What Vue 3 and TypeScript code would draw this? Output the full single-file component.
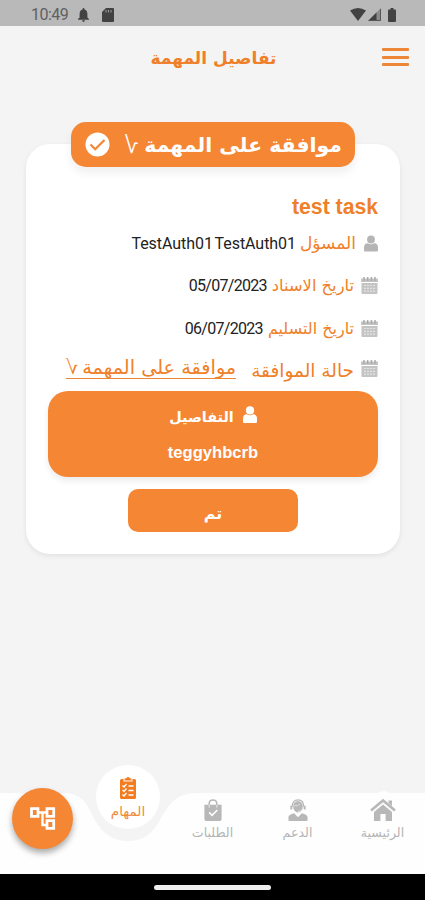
<script setup lang="ts">
interface Row { kind: string; label: string; value: string }
const rows: Row[] = [
  { kind: 'person', label: 'المسؤل', value: 'TestAuth01 TestAuth01' },
  { kind: 'assigned', label: 'تاريخ الاسناد', value: '05/07/2023' },
  { kind: 'delivery', label: 'تاريخ التسليم', value: '06/07/2023' },
]
</script>

<template>
  <div class="screen" dir="rtl">
    <header class="status" dir="ltr">
      <span class="time">10:49</span>
      <svg class="bell" width="11" height="14" viewBox="0 0 11 14"><path d="M5.5 0Q6.5 0 6.5 1.4Q9.4 2.3 9.4 6V9.5L11 11V11.7H0V11L1.6 9.5V6Q1.6 2.3 4.5 1.4Q4.5 0 5.5 0ZM4 12.3H7Q6.7 14 5.5 14Q4.3 14 4 12.3Z" fill="#424242" /></svg>
      <svg class="sd" width="12" height="14" viewBox="0 0 12 14"><path d="M4 0H11Q12 0 12 1V13Q12 14 11 14H1Q0 14 0 13V4Z" fill="#424242" /><path d="M4 2V4.5M6.5 2V4.5M9 2V4.5" stroke="#999" stroke-width="1.1" /></svg>
      <span class="grow"></span>
      <svg width="16" height="13" viewBox="0 0 16 13"><path d="M0 2.6Q8-2.6 16 2.6L8 13Z" fill="#424242" /></svg>
      <svg class="signal" width="13" height="13" viewBox="0 0 13 13"><path d="M13 0V13H0Z" fill="#8b8b8b" /><path d="M8.5 4.5V13H0Z" fill="#424242" /><path d="M12.5 1V12.5H1" fill="none" stroke="#555" /></svg>
      <svg class="battery" width="8" height="14" viewBox="0 0 8 14"><path d="M2.5 0H5.5V1.4H7Q8 1.4 8 2.4V13Q8 14 7 14H1Q0 14 0 13V2.4Q0 1.4 1 1.4H2.5Z" fill="#424242" /></svg>
    </header>

    <div class="appbar">
      <button class="menu" aria-label="القائمة"><i></i><i></i><i></i></button>
      <h1><span class="fit">تفاصيل المهمة</span></h1>
    </div>

    <main class="card">
      <div class="badge">
        <span class="badge-text fit">موافقة على المهمة</span>
        <span class="root">√</span>
        <svg class="check" width="25" height="25" viewBox="0 0 25 25"><circle cx="12.5" cy="12.5" r="12" fill="#fff" /><path d="M5.5 12.5L10.2 17.2L19.5 8" fill="none" stroke="#f58634" stroke-width="2.3" /></svg>
      </div>
      <h2 dir="ltr">test task</h2>
      <div v-for="row in rows" :key="row.kind" class="row" :class="row.kind">
        <svg v-if="row.kind === 'person'" class="ricon" width="15" height="17" viewBox="0 0 15 17"><circle cx="7.5" cy="4.2" r="4.2" fill="#b5b5b5" /><path d="M0 16V13Q0 8.5 4 8.3Q7.5 10.5 11 8.3Q15 8.5 15 13V16Q15 17 14 17H1Q0 17 0 16Z" fill="#b5b5b5" /></svg>
        <svg v-else class="ricon" width="17" height="17" viewBox="0 0 17 17"><path d="M0 1.5H17V5H0ZM.5 6H16.5V16Q16.5 17 15.5 17H1.5Q.5 17 .5 16Z" fill="#c4c4c4" /><path d="M3 0V4M6.7 0V4M10.4 0V4M14 0V4" stroke="#aaa" stroke-width="1.5" /><path d="M3 8.5H14M3 11.3H14M3 14.1H14" stroke="#e4e4e4" stroke-width="1.2" stroke-dasharray="2 1" /></svg>
        <span class="label fit">{{ row.label }}</span>
        <span class="value fit" dir="ltr">{{ row.value }}</span>
      </div>
      <div class="row approval">
        <svg class="ricon" width="17" height="17" viewBox="0 0 17 17"><path d="M0 1.5H17V5H0ZM.5 6H16.5V16Q16.5 17 15.5 17H1.5Q.5 17 .5 16Z" fill="#c4c4c4" /><path d="M3 0V4M6.7 0V4M10.4 0V4M14 0V4" stroke="#aaa" stroke-width="1.5" /><path d="M3 8.5H14M3 11.3H14M3 14.1H14" stroke="#e4e4e4" stroke-width="1.2" stroke-dasharray="2 1" /></svg>
        <span class="label fit">حالة الموافقة</span>
        <a class="link"><span class="fit">موافقة على المهمة</span><span class="root">√</span></a>
      </div>
      <section class="details">
        <div class="details-head">
          <svg width="14" height="17" viewBox="0 0 15 18"><circle cx="7.5" cy="4.6" r="4.4" fill="#fff" /><path d="M0 17V13.5Q0 9 4 8.8Q7.5 11 11 8.8Q15 9 15 13.5V17Q15 18 14 18H1Q0 18 0 17Z" fill="#fff" /></svg>
          <span class="fit">التفاصيل</span>
        </div>
        <p dir="ltr">teggyhbcrb</p>
      </section>
      <button class="done"><span class="fit">تم</span></button>
    </main>

    <nav class="nav">
      <svg class="nav-bg" width="425" height="81" viewBox="0 0 425 81"><path d="M0 0H62C88 0 88 17 98 32Q109 48 128 48Q147 48 157 32C167 15 173 0 197 0H376L382-1.5Q385-3 389 0H425V81H0Z" fill="#fefefe" /></svg>
      <div class="item home">
        <svg width="26" height="22" viewBox="0 0 26 22"><path d="M1 11.5L13 1.5L25 11.5" fill="none" stroke="#b8b8b8" stroke-width="2.6" /><path d="M18.5 1.5H22V7L18.5 4ZM13 5.5L22 13V22H15.6V15H10.4V22H4V13Z" fill="#b8b8b8" /></svg>
        <span class="fit">الرئيسية</span>
      </div>
      <div class="item support">
        <svg width="20" height="22" viewBox="0 0 20 23"><path d="M4 8Q4 1 10 1T16 8" fill="none" stroke="#b8b8b8" stroke-width="1.3" /><ellipse cx="10" cy="8" rx="5" ry="6" fill="#b8b8b8" /><path d="M3 7V11M17 7V11" stroke="#b8b8b8" stroke-width="2" /><path d="M0 22V19Q0 16.5 6 15L10 19L14 15Q20 16.5 20 19V22Q20 23 19 23H1Q0 23 0 22Z" fill="#b8b8b8" /><path d="M6 7Q10 8 12 5M14 11Q13 13 10 13" fill="none" stroke="#eee" stroke-width=".8" /></svg>
        <span class="fit">الدعم</span>
      </div>
      <div class="item orders">
        <svg width="18" height="22" viewBox="0 0 18 23"><path d="M5 9V5Q5 1 9 1T13 5V9" fill="none" stroke="#b8b8b8" stroke-width="1.6" /><path d="M0 6H18V21Q18 23 16 23H2Q0 23 0 21Z" fill="#b8b8b8" /><path d="M5 6V9M13 6V9" stroke="#eee" stroke-width="1" /><path d="M5 14L8 17L13.5 11.5" fill="none" stroke="#fff" stroke-width="1.7" /></svg>
        <span class="fit">الطلبات</span>
      </div>
      <div class="item tasks">
        <svg width="16" height="22" viewBox="0 0 16 22"><path d="M1.5 2H3.5V4.5H12.5V2H14.5Q16 2 16 3.5V20.5Q16 22 14.5 22H1.5Q0 22 0 20.5V3.5Q0 2 1.5 2ZM4.5 1.5H6Q8-1.3 10 1.5H11.5V3.6H4.5Z" fill="#f37b20" /><path d="M2.5 8.5L4 10L6.5 7M2.5 13L4 14.5L6.5 11.5M2.5 17.5L4 19L6.5 16M8.5 9H13.5M8.5 13.5H13.5M8.5 18H13.5" fill="none" stroke="#fff" stroke-width="1.3" /></svg>
        <span class="fit">المهام</span>
      </div>
      <button class="fab" aria-label="المخطط">
        <svg width="26" height="24" viewBox="0 0 26 24"><path d="M8 5.5H17M12.5 5.5V18H17" fill="none" stroke="#fff" stroke-width="2.4" /><path d="M1.5 1.7H8V9.3H1.5ZM17 1.7H23.7V9.3H17ZM17 13.7H23.7V21.3H17Z" fill="none" stroke="#fff" stroke-width="2.8" /></svg>
      </button>
    </nav>
    <footer class="system"><i></i></footer>
  </div>
</template>

<style>
body { margin: 0; }
</style>

<style scoped>
* { box-sizing: border-box; }
.screen { width: 425px; height: 900px; display: flex; flex-direction: column; background: #f4f4f4; overflow: hidden; font-family: "DejaVu Sans", sans-serif; color: #ef8029; }
svg { display: block; flex: none; overflow: visible; }
button { border: 0; padding: 0; font: inherit; color: inherit; background: none; }
h1, h2, p { margin: 0; }
.fit { display: inline-block; white-space: nowrap; flex: none; }
.status { height: 26px; flex: none; background: #b9b9b9; display: flex; align-items: center; padding: 3px 29px 0 31px; }
.time { font: 16px/20px Roboto, sans-serif; letter-spacing: -0.5px; color: #606060; width: 38px; white-space: nowrap; }
.bell { margin-left: 9px; }
.sd { margin-left: 13px; }
.grow { flex: 1; }
.signal { margin-left: 2px; }
.battery { margin-left: 7px; }
.appbar { height: 96px; flex: none; display: flex; padding: 22px 16px 0; }
.menu { width: 27px; height: 18px; display: flex; flex-direction: column; justify-content: space-between; }
.menu i { height: 3px; background: #ed8637; border-radius: 1px; }
h1 { font-size: 17px; line-height: 24px; height: 24px; width: 125px; margin: -2px 106px 0 0; display: flex; justify-content: center; }
.card { width: 374px; height: 410px; flex: none; margin: 22px 25px 0 26px; background: #fff; border-radius: 24px; box-shadow: 0 2px 5px #00000014; display: flex; flex-direction: column; align-items: center; padding: 0 22px; }
.badge { width: 284px; height: 45px; flex: none; margin: -22px 0 0 23px; align-self: flex-end; background: #f58634; color: #fff; border-radius: 15px; box-shadow: 0 6px 10px #00000010; display: flex; align-items: center; padding: 0 13px 0 15px; }
.badge-text { font-size: 20.4px; line-height: 30px; font-weight: 700; }
.root { display: inline-block; transform: scaleX(-1); }
.badge .root { font-size: 24px; line-height: 30px; margin-right: 6px; font-family: "DejaVu Sans Light", "DejaVu Sans", sans-serif; font-weight: 200; }
.check { margin-right: auto; transform: translateX(-1px); }
h2 { font: 700 21.2px/26px "Liberation Sans", sans-serif; align-self: flex-start; margin-top: 27px; height: 26px; }
.row { height: 42px; flex: none; align-self: stretch; display: flex; align-items: center; font-size: 16px; }
.ricon { width: 17px; }
.person .ricon { width: 14px; }
.person { margin-top: 2px; }
.assigned { height: 43px; }
.label { margin-right: 7px; }
.person .label { font-size: 17px; margin-right: 8px; }
.assigned .label { font-size: 16.3px; }
.value { margin-right: 5px; font-family: Roboto, sans-serif; color: #222; letter-spacing: -0.7px; }
.person .value { margin-right: 4px; letter-spacing: -0.05px; word-spacing: -2px; }
.approval { font-size: 18.5px; }
.approval .ricon { margin-top: -3px; }
.link { margin: -4px 15px 0 0; font-size: 19.3px; line-height: 20px; display: flex; gap: 4px; border-bottom: 1px solid #ed8637; }
.details { width: 330px; height: 86px; flex: none; background: #f58634; color: #fff; border-radius: 20px; box-shadow: 0 4px 6px #00000014; display: flex; flex-direction: column; align-items: center; padding-top: 15px; }
.details-head { display: flex; gap: 9px; height: 25px; font-size: 14.4px; line-height: 23px; font-weight: 700; }
.details p { font: 700 16.6px/22px "Liberation Sans", sans-serif; margin-top: 11px; }
.done { width: 170px; height: 43px; flex: none; background: #f58634; color: #fff; border-radius: 10px; margin-top: 12px; padding-top: 5px; font-size: 16px; font-weight: 700; }
.nav { height: 81px; margin-top: auto; flex: none; position: relative; display: flex; padding: 6px 0 0; }
.nav-bg { position: absolute; left: 0; top: 0; }
.item { width: 85px; position: relative; display: flex; flex-direction: column; align-items: center; gap: 4px; font-size: 12.6px; color: #b5b5b5; flex: none; }
.tasks { width: 64px; height: 64px; border-radius: 50%; background: #fff; color: #f08a3c; margin: -34px 10px 0; padding-top: 12px; font-size: 13.5px; }
.fab { position: absolute; left: 12px; top: -5px; width: 61px; height: 61px; border-radius: 50%; background: #f58634; box-shadow: 0 4px 6px #0005; display: flex; align-items: center; justify-content: center; }
.system { height: 26px; flex: none; background: #000; display: flex; justify-content: center; padding-top: 11px; }
.system i { width: 117px; height: 5px; background: #eee; border-radius: 3px; }
</style>
